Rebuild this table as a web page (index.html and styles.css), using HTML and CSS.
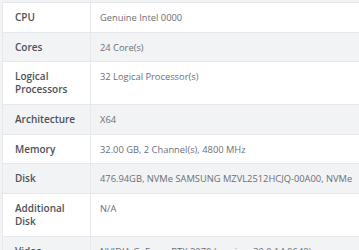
FILE: index.html
```html
<!DOCTYPE html>
<html>
<head>
<meta charset="utf-8">
<link rel="stylesheet" href="styles.css">
</head>
<body>
<div class="spec">
  <table class="spec-table">
    <tbody>
      <tr><th>CPU</th><td>Genuine Intel 0000</td></tr>
      <tr class="alt"><th>Cores</th><td>24 Core(s)</td></tr>
      <tr><th>Logical Processors</th><td>32 Logical Processor(s)</td></tr>
      <tr class="alt"><th>Architecture</th><td>X64</td></tr>
      <tr><th>Memory</th><td>32.00 GB, 2 Channel(s), 4800 MHz</td></tr>
      <tr class="alt"><th>Disk</th><td>476.94GB, NVMe SAMSUNG MZVL2512HCJQ-00A00, NVMe</td></tr>
      <tr><th>Additional Disk</th><td>N/A</td></tr>
      <tr class="alt"><th>Video</th><td>NVIDIA GeForce RTX 3070 (version: 30.0.14.9649)</td></tr>
    </tbody>
  </table>
</div>
</body>
</html>
```
FILE: styles.css
```css
html, body {
  margin: 0;
  padding: 0;
  background: #ffffff;
  overflow: hidden;
}
body {
  font-family: "Open Sans", "Noto Sans", sans-serif;
  font-size: 9.33px;
  color: #6b6f76;
}
.spec {
  padding-top: 2px;
  background: #f2f3f5;
}
.spec-table {
  border-collapse: separate;
  border-spacing: 0;
  table-layout: fixed;
  width: 400px;
  margin-left: 2px;
  border-left: 1px solid #e6e8eb;
  background: #ffffff;
}
.spec-table tr.alt {
  background: #f2f3f5;
}
.spec-table th,
.spec-table td {
  box-sizing: border-box;
  vertical-align: top;
  line-height: 13.3px;
  padding-top: 8px;
  padding-bottom: 7.3px;
  border-top: 1px solid #e6e8eb;
}
.spec-table th {
  width: 88px;
  text-align: left;
  font-size: 10px;
  font-weight: 600;
  color: #4d5157;
  padding-left: 12px;
  padding-right: 10px;
  border-right: 1px solid #e6e8eb;
}
.spec-table td {
  padding-left: 9px;
  padding-right: 10px;
  white-space: nowrap;
}
```
